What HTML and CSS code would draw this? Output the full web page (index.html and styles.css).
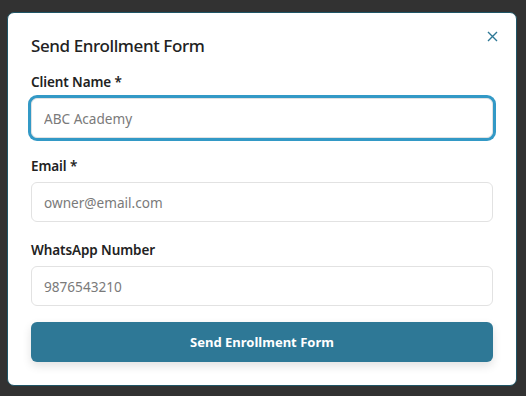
FILE: index.html
```html
<!DOCTYPE html>
<html>
<head>
<meta charset="utf-8">
<title>Send Enrollment Form</title>
<link rel="stylesheet" href="styles.css">
</head>
<body>
<div class="modal">
  <div class="modal-head">
    <h2 class="modal-title">Send Enrollment Form</h2>
    <button class="close" type="button" aria-label="Close">
      <svg width="11" height="11" viewBox="0 0 11 11"><path d="M1 1L10 10M10 1L1 10" stroke="#2e7896" stroke-width="1.4" fill="none"/></svg>
    </button>
  </div>
  <form class="form">
    <div class="field">
      <label class="label">Client Name *</label>
      <input class="input focused" type="text" placeholder="ABC Academy">
    </div>
    <div class="field">
      <label class="label">Email *</label>
      <input class="input" type="text" placeholder="owner@email.com">
    </div>
    <div class="field">
      <label class="label">WhatsApp Number</label>
      <input class="input" type="text" placeholder="9876543210">
    </div>
    <button class="submit" type="button">Send Enrollment Form</button>
  </form>
</div>
</body>
</html>
```

FILE: styles.css
```css
html, body {
  margin: 0;
  background: #323232;
}

body {
  font-family: "Noto Sans", "Open Sans", sans-serif;
  padding: 12px 9px 10px 7px;
}

.modal {
  width: 510px;
  box-sizing: border-box;
  background: #fff;
  border: 1px solid #1f5566;
  border-radius: 7px;
  padding: 21px 23px 23px 23px;
}

.modal-head {
  display: flex;
  justify-content: space-between;
  align-items: flex-start;
}

.modal-title {
  margin: 0;
  font-size: 17px;
  font-weight: 500;
  line-height: 24px;
  color: #222;
  letter-spacing: -0.4px;
}

.close {
  border: 0;
  background: none;
  padding: 0;
  margin: -3px -5px 0 0;
  width: 11px;
  height: 11px;
  cursor: pointer;
}

.close svg { display: block; }

.form {
  margin-top: 14px;
  display: flex;
  flex-direction: column;
}

.field {
  display: flex;
  flex-direction: column;
  margin-bottom: 18px;
}

.field:last-of-type { margin-bottom: 16px; }

.label {
  font-size: 13.5px;
  font-weight: 600;
  line-height: 20px;
  color: #222;
  margin-bottom: 6px;
  letter-spacing: -0.1px;
}

.input {
  height: 40px;
  box-sizing: border-box;
  border: 1px solid #e2e2e2;
  border-radius: 6px;
  padding: 0 12px;
  font-family: inherit;
  font-size: 13.6px;
  color: #333;
  outline: none;
}

.input::placeholder { color: #7a7a7a; }

.focused {
  box-shadow: 0 0 0 3px #3399c6;
}

.submit {
  height: 40px;
  border: 0;
  border-radius: 6px;
  background: #2e7896;
  color: #fff;
  font-family: inherit;
  font-size: 13px;
  font-weight: 700;
  box-shadow: 0 4px 10px rgba(0, 0, 0, 0.12);
  cursor: pointer;
}
```
